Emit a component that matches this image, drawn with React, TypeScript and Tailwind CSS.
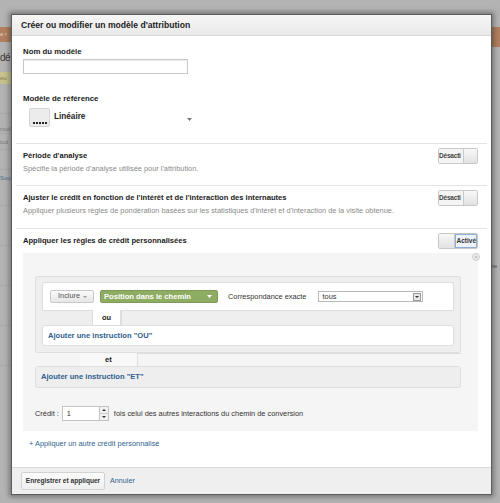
import React from "react";

function Toggle({ on }: { on: boolean }) {
  if (on) {
    return (
      <div className="flex h-[16px] w-[40px] shrink-0 overflow-hidden rounded-[2px] border border-[#c8c8c8]">
        <div className="w-[17px] bg-gradient-to-b from-[#f8f8f8] to-[#e2e2e2] border-r border-[#c8c8c8]" />
        <div className="flex flex-1 items-center justify-center border border-[#8fb0d6] bg-[#eef3f9] text-[6.5px] font-bold text-[#333]">
          Activé
        </div>
      </div>
    );
  }
  return (
    <div className="flex h-[16px] w-[40px] shrink-0 overflow-hidden rounded-[2px] border border-[#c8c8c8]">
      <div className="flex w-[24px] items-center whitespace-nowrap bg-[#f4f4f4] text-[6.5px] font-bold tracking-[-0.2px] text-[#444]">
        Désacti
      </div>
      <div className="flex-1 border-l border-[#c8c8c8] bg-gradient-to-b from-[#f8f8f8] to-[#e2e2e2]" />
    </div>
  );
}

function Section({
  title,
  desc,
  on,
  children,
}: {
  title: string;
  desc?: string;
  on: boolean;
  children?: React.ReactNode;
}) {
  return (
    <div className="mx-[4px] border-t border-[#e4e4e4] pl-[7px] pr-[9px]">
      <div className="flex items-start justify-between pt-[4px]">
        <div className="pt-[2px]">
          <div className="text-[7.6px] font-bold leading-[12px] text-[#222]">{title}</div>
          {desc && <div className="mt-[1px] text-[7.4px] leading-[11px] text-[#8a8a8a]">{desc}</div>}
        </div>
        <Toggle on={on} />
      </div>
      {children}
    </div>
  );
}

export default function App() {
  return (
    <div
      className="relative h-[503px] w-[500px] overflow-hidden bg-[#b3b3b3]"
      style={{ fontFamily: '"Liberation Sans", Arial, sans-serif' }}
    >
      {/* page behind the overlay */}
      <div className="flex h-full justify-between">
        <div className="flex w-[11px] flex-col overflow-hidden whitespace-nowrap pt-[27px]">
          <div className="flex h-[15px] items-center bg-[#b08060] text-[6px] text-[#e8d0bc]">e r</div>
          <div className="mt-[6px] text-[10px] leading-[20px] tracking-[-0.6px] text-[#3a3a3a]">dé</div>
          <div className="mt-[4px] h-[12px] bg-[#c7c28c] text-[6px] leading-[12px] text-[#7d7a55]">eu</div>
          <div className="mt-[10px] h-[20px] border-b border-[#aaaaaa]" />
          <div className="h-[20px] border-b border-[#aaaaaa] text-[6px] leading-[30px] text-[#777]">riod</div>
          <div className="h-[16px] border-b border-[#aaaaaa] text-[6px] leading-[16px] text-[#777]">iod</div>
          <div className="h-[20px] border-b border-[#aaaaaa]" />
          <div className="h-[16px] text-[6px] leading-[16px] text-[#4e6b8e]">Sou</div>
          <div className="h-[20px] border-b border-[#aaaaaa]" />
          <div className="h-[40px] border-b border-[#aaaaaa]" />
          <div className="h-[40px] border-b border-[#aaaaaa]" />
          <div className="h-[40px] border-b border-[#aaaaaa]" />
          <div className="h-[40px] border-b border-[#aaaaaa]" />
        </div>
        <div className="flex w-[8px] flex-col overflow-hidden whitespace-nowrap pt-[27px]">
          <div className="h-[20px] bg-[#b08060]" />
          <div className="mt-[214px] text-[6px] leading-[10px] text-[#555]">te</div>
        </div>
      </div>

      {/* dialog */}
      <div className="absolute left-[11px] top-[14px] flex h-[481px] w-[481px] flex-col border border-[#5c5c5c] bg-white shadow-[0_0_5px_2px_rgba(0,0,0,0.35)]">
        <div className="flex h-[21px] shrink-0 items-center border-b border-[#d6d6d6] bg-gradient-to-b from-[#f6f6f6] to-[#e9e9e9] pl-[9px] text-[8.6px] font-bold text-[#222]">
          Créer ou modifier un modèle d'attribution
        </div>

        <div className="flex flex-1 flex-col">
          {/* name + reference model */}
          <div className="h-[107px] pl-[11px] pt-[10px]">
            <div className="text-[7.8px] font-bold leading-[12px] text-[#222]">Nom du modèle</div>
            <div className="mt-[1px] h-[15px] w-[165px] border border-[#c9c9c9] bg-white shadow-[inset_0_1px_1px_rgba(0,0,0,0.08)]" />
            <div className="mt-[19px] text-[7.8px] font-bold leading-[12px] text-[#222]">Modèle de référence</div>
            <div className="mt-[3px] flex items-center pl-[6px]">
              <div className="flex h-[19px] w-[21px] items-end justify-center rounded-[2px] border border-[#d4d4d4] bg-[#ececec] pb-[2px]">
                <div className="flex gap-[1px]">
                  {[0, 1, 2, 3, 4].map((i) => (
                    <div key={i} className="h-[2px] w-[2px] bg-[#222]" />
                  ))}
                </div>
              </div>
              <div className="ml-[4px] text-[8.2px] font-bold text-[#222]">Linéaire</div>
              <svg width="5" height="3" viewBox="0 0 5 3" className="ml-[102px] mt-[3px]">
                <path d="M0 0h5L2.5 3z" fill="#777" />
              </svg>
            </div>
          </div>

          <div className="h-[42px]">
            <Section title="Période d'analyse" desc="Spécifie la période d'analyse utilisée pour l'attribution." on={false} />
          </div>
          <div className="h-[43px]">
            <Section
              title="Ajuster le crédit en fonction de l'intérêt et de l'interaction des internautes"
              desc="Appliquer plusieurs règles de pondération basées sur les statistiques d'intérêt et d'interaction de la visite obtenue."
              on={false}
            />
          </div>

          <Section title="Appliquer les règles de crédit personnalisées" on={true}>
            {/* gray area */}
            <div className="relative mt-[4px] bg-[#f5f5f5] pb-[10px] pl-[12px] pr-[17px] pt-[23px]">
              <div className="absolute right-[-2px] top-[0px] flex h-[8px] w-[8px] items-center justify-center rounded-full border border-[#cfcfcf] bg-[#eaeaea] text-[6px] leading-none text-[#aaa]">
                ×
              </div>

              {/* rule box */}
              <div className="rounded-[3px] border border-[#dedede] bg-[#eeeeee] px-[6px] pb-[6px] pt-[5px]">
                <div className="flex h-[28px] items-center rounded-t-[3px] border border-b-0 border-[#dedede] bg-white pl-[7px]">
                  <div className="flex h-[13px] w-[44px] items-center justify-end gap-[3px] rounded-[2px] border border-[#c9c9c9] bg-gradient-to-b from-[#fafafa] to-[#e6e6e6] pr-[6px] text-[7.3px] text-[#555]">
                    Inclure
                    <svg width="4" height="2" viewBox="0 0 4 2"><path d="M0 0h4L2 2z" fill="#999" /></svg>
                  </div>
                  <div className="ml-[6px] flex h-[13px] w-[118px] items-center justify-between rounded-[2px] border border-[#7f9a58] bg-[#8eac62] pl-[3px] pr-[5px] text-[7.6px] font-bold text-white">
                    Position dans le chemin
                    <svg width="5" height="3" viewBox="0 0 5 3"><path d="M0 0h5L2.5 3z" fill="#fff" /></svg>
                  </div>
                  <div className="ml-[10px] text-[7.4px] text-[#333]">Correspondance exacte</div>
                  <div className="ml-[12px] flex h-[11px] w-[105px] items-center justify-between border border-[#b9b9b9] bg-white pl-[3px] pr-[1px] text-[7.4px] text-[#333]">
                    tous
                    <div className="flex h-[8px] w-[8px] items-center justify-center border border-[#999] bg-[#e8e8e8]">
                      <svg width="4" height="2" viewBox="0 0 4 2"><path d="M0 0h4L2 2z" fill="#333" /></svg>
                    </div>
                  </div>
                </div>
                <div className="flex h-[15px]">
                  <div className="w-[50px] border-t border-[#dedede]" />
                  <div className="flex w-[29px] items-center justify-center border-x border-b-0 border-[#dedede] bg-white text-[7.4px] font-bold text-[#222]">
                    ou
                  </div>
                  <div className="flex-1 rounded-tl-[2px] border-l border-t border-[#dedede] bg-[#efefef]" />
                </div>
                <div className="flex h-[21px] items-center rounded-[3px] border border-[#dedede] bg-white pl-[5px] text-[7.6px] font-bold text-[#2f5f8f]">
                  Ajouter une instruction "OU"
                </div>
              </div>

              <div className="flex h-[13px]">
                <div className="w-[45px]" />
                <div className="flex w-[57px] items-center justify-center bg-[#f8f8f8] text-[7.6px] font-bold text-[#222]">et</div>
                <div className="flex-1 border-l border-t border-[#dedede]" />
              </div>
              <div className="flex h-[22px] items-center rounded-[3px] border border-[#dedede] bg-[#eeeeee] pl-[5px] text-[7.6px] font-bold text-[#2f5f8f]">
                Ajouter une instruction "ET"
              </div>

              <div className="mt-[18px] flex items-center text-[7.4px] text-[#333]">
                Crédit :
                <div className="ml-[3px] flex h-[15px] w-[38px] items-center border border-[#c3c3c3] bg-white pl-[4px]">1</div>
                <div className="flex h-[15px] w-[9px] flex-col border border-l-0 border-[#c3c3c3] bg-[#f1f1f1]">
                  <div className="flex flex-1 items-center justify-center border-b border-[#d0d0d0]">
                    <svg width="4" height="2" viewBox="0 0 4 2"><path d="M0 2h4L2 0z" fill="#333" /></svg>
                  </div>
                  <div className="flex flex-1 items-center justify-center">
                    <svg width="4" height="2" viewBox="0 0 4 2"><path d="M0 0h4L2 2z" fill="#333" /></svg>
                  </div>
                </div>
                <span className="ml-[5px]">fois celui des autres interactions du chemin de conversion</span>
              </div>
            </div>

            <div className="mt-[7px] pl-[6px] text-[7.4px] leading-[12px] text-[#2f5f8f]">+ Appliquer un autre crédit personnalisé</div>
          </Section>
        </div>

        <div className="flex h-[27px] shrink-0 items-center border-t border-[#d9d9d9] bg-[#efefef] pl-[9px]">
          <div className="flex h-[18px] w-[84px] items-center justify-center whitespace-nowrap rounded-[2px] border border-[#d2d2d2] bg-gradient-to-b from-[#fbfbfb] to-[#efefef] text-[6.6px] font-bold text-[#333]">
            Enregistrer et appliquer
          </div>
          <div className="ml-[5px] text-[7.2px] text-[#2f5f8f]">Annuler</div>
        </div>
      </div>
    </div>
  );
}
